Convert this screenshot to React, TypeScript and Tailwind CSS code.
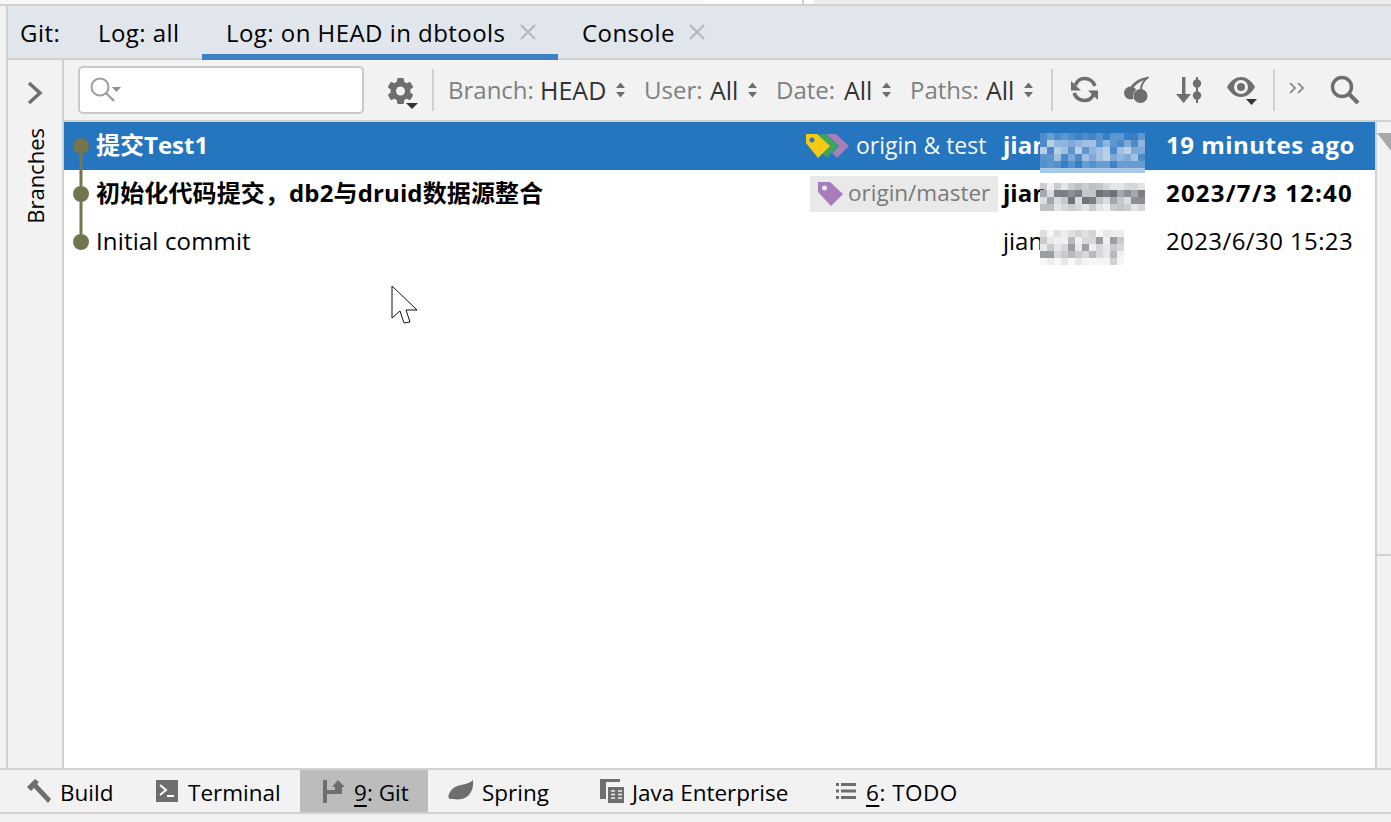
import type { ReactNode } from 'react';

const FONT = 'font-["Open_Sans","Noto_Sans_CJK_SC",sans-serif]';

function Mosaic({ colors, rows, cols }: { colors: string[]; rows: number; cols: number }) {
  const cells = [];
  for (let y = 0; y < rows; y++) {
    for (let x = 0; x < cols; x++) {
      const n = Math.floor(Math.abs(Math.sin(x * 12.9898 + y * 78.233) * 43758.5)) % colors.length;
      // outer rows fade out like the blurred name
      const fade = y === 0 || y === rows - 1 ? 0.45 : 1;
      cells.push(<rect key={`${x}-${y}`} x={x * 7} y={y * 7} width="7" height="7" fill={colors[n]} opacity={fade} />);
    }
  }
  return (
    <svg width={cols * 7} height={rows * 7} className="shrink-0">
      {cells}
    </svg>
  );
}

function Graph({ top, bottom }: { top: boolean; bottom: boolean }) {
  return (
    <svg width="32" height="48" className="shrink-0">
      {top && <rect x="15.5" y="0" width="3" height="24" fill="#74744f" />}
      {bottom && <rect x="15.5" y="24" width="3" height="24" fill="#74744f" />}
      <circle cx="17" cy="24" r="8" fill="#74744f" />
    </svg>
  );
}

function Arrows() {
  return (
    <svg width="11" height="16" viewBox="0 0 11 16" className="shrink-0">
      <path d="M5.5 0.5 10 6H1zM5.5 15.5 1 10h9z" fill="#6e6e6e" />
    </svg>
  );
}

function Filter({
  label,
  value,
  className,
  labelW,
  valueW,
}: {
  label: string;
  value: string;
  className: string;
  labelW: string;
  valueW: string;
}) {
  return (
    <div className={`flex shrink-0 items-center ${className}`}>
      <span className={`text-[#7f7f7f] ${labelW}`}>{label}</span>
      <span className={`text-[25px] text-[#333333] ${valueW}`}>{value}</span>
      <Arrows />
    </div>
  );
}

function Sep({ className }: { className: string }) {
  return <div className={`h-[42px] w-[2px] bg-[#d1d1d1] shrink-0 ${className}`} />;
}

function CloseX() {
  return (
    <svg width="16" height="16" viewBox="0 0 16 16" className="shrink-0">
      <path d="M1 1l14 14M15 1 1 15" stroke="#b5b8bc" strokeWidth="2" />
    </svg>
  );
}

function BottomItem({
  icon,
  children,
  className,
}: {
  icon: ReactNode;
  children: ReactNode;
  className: string;
}) {
  return (
    <div className={`flex h-full items-center shrink-0 ${className}`}>
      {icon}
      <span className="pt-[5px] text-[22.5px]">{children}</span>
    </div>
  );
}

export default function App() {
  return (
    <div className={`${FONT} flex h-[822px] w-[1391px] flex-col overflow-hidden bg-[#f2f2f2] text-[24px] leading-none text-black`}>
      {/* sliver of the editor above */}
      <div className="flex h-[4px] shrink-0 bg-[#ececec]">
        <div className="h-full w-[703px] bg-[#f7f7f7]" />
        <div className="h-full w-[99px] bg-white" />
        <div className="h-full w-[2px] bg-[#d1d1d1]" />
        <div className="h-full w-[10px] bg-white" />
      </div>
      <div className="h-[2px] shrink-0 bg-[#d1d1d1]" />

      <div className="flex min-h-0 flex-1 pl-[6px]">
        <div className="w-[2px] shrink-0 bg-[#d1d1d1]" />
        <div className="flex min-w-0 flex-1 flex-col">
          {/* tabs */}
          <div className="flex h-[54px] shrink-0 items-center border-b-2 border-[#d1d1d1] bg-[#e1e5ec] tracking-[0.45px]">
            <span className="ml-[12px] w-[78px] shrink-0 pt-[2px]">Git:</span>
            <span className="w-[104px] shrink-0 pt-[2px]">Log: all</span>
            <div className="relative flex h-full w-[356px] shrink-0 items-center pl-[24px]">
              <span className="w-[294px] shrink-0 pt-[2px]">Log: on HEAD in dbtools</span>
              <CloseX />
              <div className="absolute bottom-[-2px] left-0 h-[6px] w-full bg-[#3f81c5]" />
            </div>
            <span className="ml-[24px] w-[107px] shrink-0 pt-[2px]">Console</span>
            <CloseX />
          </div>

          <div className="flex min-h-0 flex-1">
            {/* side stripe */}
            <div className="flex w-[56px] shrink-0 flex-col items-center border-r-2 border-[#d1d1d1] bg-[#f2f2f2] pr-[1px]">
              <svg width="16" height="24" viewBox="0 0 16 24" className="mt-[21px]">
                <path d="M2 2l11 10L2 22" fill="none" stroke="#6e6e6e" strokeWidth="3.4" />
              </svg>
              <span className="mt-[23px] rotate-180 text-[22px] [writing-mode:vertical-rl]">Branches</span>
            </div>

            <div className="flex min-w-0 flex-1 flex-col">
              {/* toolbar */}
              <div className="flex h-[62px] shrink-0 items-center border-b-2 border-[#d1d1d1]">
                <div className="ml-[14px] flex h-[48px] w-[286px] shrink-0 items-center rounded-[5px] border-2 border-[#c9c9c9] bg-white pl-[9px]">
                  <svg width="34" height="28" viewBox="0 0 34 28">
                    <circle cx="11" cy="11" r="8.5" fill="none" stroke="#9a9fa5" strokeWidth="2" />
                    <path d="M17 17l8 8" stroke="#9a9fa5" strokeWidth="2.4" />
                    <path d="M23 11h9l-4.5 5z" fill="#8c8f93" />
                  </svg>
                </div>
                <svg width="32" height="36" viewBox="0 0 32 36" className="ml-[22px] mt-[2px] shrink-0">
                  <g fill="#6e6e6e">
                    <circle cx="14.5" cy="18" r="10" />
                    <rect x="11" y="5" width="7" height="26" rx="1.5" />
                    <rect x="11" y="5" width="7" height="26" rx="1.5" transform="rotate(60 14.5 18)" />
                    <rect x="11" y="5" width="7" height="26" rx="1.5" transform="rotate(120 14.5 18)" />
                  </g>
                  <circle cx="14.500" cy="18" r="4.500" fill="#f2f2f2" />
                  <path d="M20 30h12l-6 6z" fill="#333" />
                </svg>
                <Sep className="ml-[14px]" />
                <Filter label="Branch:" value="HEAD" className="ml-[14px]" labelW="w-[92px]" valueW="w-[75px]" />
                <Filter label="User:" value="All" className="ml-[18px]" labelW="w-[66px]" valueW="w-[37px]" />
                <Filter label="Date:" value="All" className="ml-[18px]" labelW="w-[68px]" valueW="w-[37px]" />
                <Filter label="Paths:" value="All" className="ml-[18px]" labelW="w-[76px]" valueW="w-[37px]" />
                <Sep className="ml-[17px]" />
                <svg width="28" height="28" viewBox="0 0 28 28" className="ml-[18px] shrink-0" fill="none">
                  <path d="M24 10C22 5 18 2.500 13.500 2.500 9 2.500 6 5 4.500 9M3 17c2 5 6 7.500 10.500 7.500 4.500 0 7.500-2.500 9-6" stroke="#6e6e6e" strokeWidth="3.600" />
                  <path d="M0 5l10 9.500H0zM27 24l-10-9.500h10z" fill="#6e6e6e" />
                </svg>
                <svg width="30" height="30" viewBox="0 0 30 30" className="ml-[23px] shrink-0">
                  <circle cx="8.500" cy="18" r="6.500" fill="#6e6e6e" />
                  <circle cx="18.500" cy="21" r="7.500" fill="#f2f2f2" />
                  <circle cx="18.500" cy="21" r="7" fill="#6e6e6e" />
                  <path d="M8 13C12 6 18 3 27 1.500l-.5 2C22 6 20 11 20 15h-2c0-5 2-8 4-10C17 7 13 10 10.500 14z" fill="#6e6e6e" />
                </svg>
                <svg width="28" height="28" viewBox="0 0 28 28" className="ml-[23px] shrink-0">
                  <path d="M7 1h3.400v17H16l-7.300 9L1 18h6z" fill="#6e6e6e" />
                  <rect x="21" y="1" width="2" height="26" fill="#6e6e6e" />
                  <circle cx="22" cy="7.500" r="4.200" fill="#6e6e6e" />
                  <circle cx="22" cy="19.500" r="4.200" fill="#6e6e6e" />
                </svg>
                <svg width="32" height="32" viewBox="0 0 32 32" className="ml-[23px] shrink-0">
                  <path d="M1 13C5 6 10 3 15 3s10 3 14 10c-4 7-9 10-14 10S5 20 1 13z" fill="#6e6e6e" />
                  <circle cx="15" cy="13" r="7" fill="#f2f2f2" />
                  <circle cx="15" cy="13" r="4" fill="#6e6e6e" />
                  <path d="M20 25h11l-5.500 6z" fill="#333" />
                </svg>
                <Sep className="ml-[15px]" />
                <svg width="16" height="12" viewBox="0 0 16 12" className="ml-[14px] mb-[4px] shrink-0" fill="none">
                  <path d="M1 1l5 5-5 5M9 1l5 5-5 5" stroke="#777" strokeWidth="1.500" />
                </svg>
                <svg width="30" height="30" viewBox="0 0 30 30" className="ml-[25px] shrink-0" fill="none">
                  <circle cx="12" cy="12" r="9.500" stroke="#6e6e6e" strokeWidth="3.400" />
                  <path d="M18.500 18.500 28 28" stroke="#6e6e6e" strokeWidth="4" />
                </svg>
              </div>

              {/* log + gutter */}
              <div className="flex min-h-0 flex-1">
                <div className="min-w-0 flex-1 bg-white">
                  <div className="flex h-12 items-center bg-[#2675bf] text-white">
                    <Graph top={false} bottom />
                    <span className="min-w-0 flex-1 pb-[2px] font-bold">提交Test1</span>
                    <svg width="44" height="26" viewBox="0 0 44 26" className="mr-[6px] shrink-0">
                      <path d="M20 1h10l13 12-12 12-11-11z" fill="#a77dbb" />
                      <path d="M10 1h10l13 12-12 12-11-11z" fill="#3fa35a" stroke="#2675bf" strokeWidth="0.6" />
                      <path d="M0 1h11l13 12-12 12L0 10z" fill="#f6c915" />
                      <circle cx="6" cy="7" r="2.500" fill="#2675bf" />
                    </svg>
                    <span className="w-[147px] shrink-0 pb-[2px] text-[23px] text-[#f4f8fc]">origin &amp; test</span>
                    <div className="flex w-[163px] shrink-0 items-center font-bold">
                      <span className="w-[37px] shrink-0 pb-[2px]">jian</span>
                      <div className="relative mt-[8px]">
                        <Mosaic colors={['#7fa9d8', '#a2c1e2', '#5f95ce', '#b8cfe8', '#4f8ac8', '#8fb5e0']} rows={5} cols={15} />
                        <div className="absolute left-0 top-full h-[5px] w-full bg-[#a9c8e8]" />
                      </div>
                    </div>
                    <span className="w-[209px] shrink-0 pb-[2px] font-bold tracking-[0.5px]">19 minutes ago</span>
                  </div>

                  <div className="flex h-12 items-center">
                    <Graph top bottom />
                    <span className="min-w-0 flex-1 pb-[2px] font-bold tracking-[0.13px]">初始化代码提交，db2与druid数据源整合</span>
                    <div className="mr-[5px] flex h-[36px] w-[188px] shrink-0 items-center bg-[#e9e9e9] pl-[8px] text-[#7a7a7a]">
                      <svg width="26" height="26" viewBox="0 0 26 26" className="mr-[4px] shrink-0">
                        <path d="M0 1h12l13 12-12 12L0 11z" fill="#a77dbb" />
                        <circle cx="6.500" cy="7" r="2.500" fill="#e9e9e9" />
                      </svg>
                      <span className="pb-[2px] text-[22.5px]">origin/master</span>
                    </div>
                    <div className="flex w-[163px] shrink-0 items-center font-bold">
                      <span className="w-[37px] shrink-0 pb-[2px]">jian</span>
                      <div className="mt-[6px]">
                        <Mosaic colors={['#8a8f96', '#c3c6ca', '#6f7277', '#dcdde0', '#a5a7ac', '#7c7f85']} rows={4} cols={15} />
                      </div>
                    </div>
                    <span className="w-[209px] shrink-0 pb-[2px] font-bold tracking-[1.2px]">2023/7/3 12:40</span>
                  </div>

                  <div className="flex h-12 items-center">
                    <Graph top bottom={false} />
                    <span className="min-w-0 flex-1 pb-[2px] tracking-[0.15px]">Initial commit</span>
                    <div className="flex w-[163px] shrink-0 items-center">
                      <span className="w-[37px] shrink-0 pb-[2px]">jian</span>
                      <div className="mt-[10px]">
                        <Mosaic colors={['#b6b9bd', '#d6d8da', '#9a9da2', '#e8e8ea', '#c8cacc', '#f0f0f1']} rows={5} cols={12} />
                      </div>
                    </div>
                    <span className="w-[209px] shrink-0 pb-[2px] tracking-[0.4px]">2023/6/30 15:23</span>
                  </div>
                </div>

                <div className="flex w-[16px] shrink-0 flex-col border-l-2 border-[#d1d1d1]">
                  <svg width="14" height="22" viewBox="0 0 14 22" className="mt-[9px]">
                    <path d="M0 2h14v18z" fill="#a8a8a8" />
                  </svg>
                  <div className="mt-[401px] h-[2px] bg-[#d1d1d1]" />
                </div>
              </div>
            </div>
          </div>
        </div>
      </div>

      {/* bottom tool bar */}
      <div className="flex h-[46px] shrink-0 items-center border-y-2 border-[#d1d1d1]">
        <BottomItem
          className="ml-[26px] w-[130px]"
          icon={
            <svg width="26" height="26" viewBox="0 0 26 26" className="mr-[8px] shrink-0">
              <path d="M9 1 1 9l4 4 3-3 14 15 3-4L11 6l2-2z" fill="#6e6e6e" />
            </svg>
          }
        >
          Build
        </BottomItem>
        <BottomItem
          className="w-[144px]"
          icon={
            <svg width="22" height="22" viewBox="0 0 22 22" className="mr-[10px] shrink-0">
              <rect width="22" height="22" fill="#6e6e6e" />
              <path d="M4 5l6 5-6 5" fill="none" stroke="#fff" strokeWidth="2" />
              <path d="M11 16h7" stroke="#fff" strokeWidth="2" />
            </svg>
          }
        >
          Terminal
        </BottomItem>
        <BottomItem
          className="w-[128px] bg-[#bcbcbc] pl-[23px]"
          icon={
            <svg width="22" height="24" viewBox="0 0 22 24" className="mr-[9px] shrink-0">
              <path d="M0 1h4v23H0zM4 11h8V8h-3l6-7 7 7h-3v7H4z" fill="#6e6e6e" />
            </svg>
          }
        >
          <span className="underline underline-offset-4">9</span>: Git
        </BottomItem>
        <BottomItem
          className="ml-[20px] w-[152px]"
          icon={
            <svg width="26" height="22" viewBox="0 0 26 22" className="mr-[8px] shrink-0">
              <path d="M25 0c1 9-3 17-11 19-5 1-9 0-12 0-2-1-2-3-1-5 2-5 6-8 12-9 5-1 9-2 12-5z" fill="#6e6e6e" />
            </svg>
          }
        >
          Spring
        </BottomItem>
        <BottomItem
          className="w-[236px]"
          icon={
            <svg width="24" height="24" viewBox="0 0 24 24" className="mr-[8px] shrink-0">
              <path d="M0 0h20v3H0zM0 3h6v17H0z" fill="#6e6e6e" />
              <rect x="8" y="8" width="16" height="16" fill="#6e6e6e" />
              <path d="M11 12h4M11 15.500h4M11 19h4M18 12h4M18 15.500h4M18 19h4" stroke="#eee" strokeWidth="1.400" />
            </svg>
          }
        >
          Java Enterprise
        </BottomItem>
        <BottomItem
          className="tracking-[0.5px]"
          icon={
            <svg width="20" height="18" viewBox="0 0 20 18" className="mr-[10px] shrink-0">
              <path d="M0 1h3v3H0zM5 1h15v3H5zM0 7.500h3v3H0zM5 7.500h15v3H5zM0 14h3v3H0zM5 14h15v3H5z" fill="#6e6e6e" />
            </svg>
          }
        >
          <span className="underline underline-offset-4">6</span>: TODO
        </BottomItem>
      </div>
      <div className="h-[8px] shrink-0" />

      {/* mouse pointer */}
      <svg width="28" height="40" viewBox="0 0 28 40" className="absolute left-[391px] top-[285px]">
        <path d="M1 1v32l8-7 4 12 6-1-4-12h11z" fill="#fff" stroke="#111" strokeWidth="1" />
      </svg>
    </div>
  );
}
